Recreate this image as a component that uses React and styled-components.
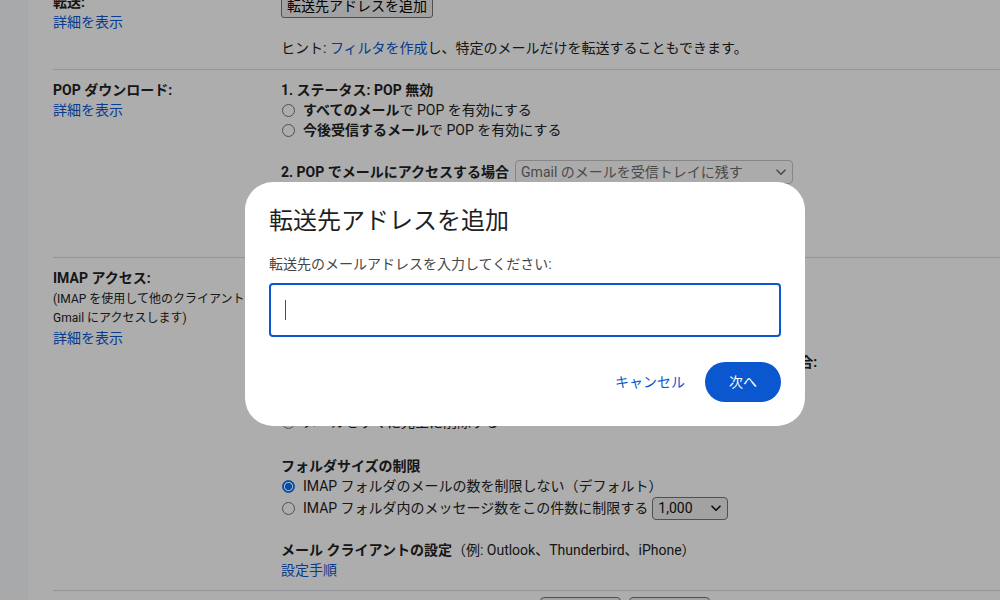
import React from 'react';
import styled, { createGlobalStyle } from 'styled-components';

const GlobalStyle = createGlobalStyle`
  html, body {
    margin: 0;
    padding: 0;
    height: 100%;
    overflow: hidden;
    background: #fff;
  }
  body {
    font-family: Roboto, "Noto Sans CJK JP", sans-serif;
    font-size: 14px;
    line-height: 20px;
    color: #222;
  }
  #root { height: 100%; }
`;

const Page = styled.div`
  display: flex;
  height: 100vh;
  overflow: hidden;
`;

const SideStrip = styled.div`
  width: 28px;
  flex: none;
  background: #f8fafd;
`;

const Main = styled.main`
  flex: 1;
  padding-left: 25px;
  min-width: 0;
`;

const SettingsList = styled.div`
  margin-top: -18px;
`;

const Row = styled.section`
  display: grid;
  grid-template-columns: 228px 1fr;
  padding: 10px 0 ${p => p.$padBottom ?? 11}px;
  border-bottom: 1px solid #dadce0;
`;

const LabelCol = styled.div`
  display: flex;
  flex-direction: column;
`;

const Label = styled.div`
  font-weight: 700;
`;

const SubNote = styled.div`
  font-size: 12px;
  line-height: 19px;
  padding-top: 2px;
  color: #222;
`;

const Link = styled.a`
  color: #0b57d0;
  text-decoration: none;
  cursor: pointer;
`;

const ContentCol = styled.div`
  display: flex;
  flex-direction: column;
  min-width: 0;
`;

const Block = styled.div`
  display: flex;
  flex-direction: column;
  margin-top: ${p => p.$gap || 0}px;
`;

const Line = styled.div`
  display: flex;
  align-items: center;
  min-height: 20px;
  white-space: nowrap;
`;

const Strong = styled.span`
  font-weight: 700;
`;

const NativeButton = styled.button`
  font: inherit;
  font-size: 14px;
  height: 24px;
  padding: 0 5px;
  margin-top: 2px;
  align-self: flex-start;
  background: #efefef;
  color: #000;
  border: 1px solid #767676;
  border-radius: 3px;
  line-height: 20px;
`;

const RadioRow = styled.label`
  display: flex;
  align-items: center;
  gap: 8px;
  min-height: ${p => p.$tall ? 24 : 20}px;
  white-space: nowrap;
`;

const Radio = styled.span`
  width: 13px;
  height: 13px;
  margin-left: 1px;
  flex: none;
  box-sizing: border-box;
  border-radius: 50%;
  border: 1px solid ${p => (p.$checked ? '#0075ff' : '#767676')};
  background: ${p =>
    p.$checked
      ? 'radial-gradient(circle, #0075ff 0 3.3px, #fff 3.8px 4.3px, #0075ff 4.8px)'
      : '#fff'};
`;

const SelectBox = styled.span`
  display: inline-flex;
  align-items: center;
  justify-content: space-between;
  box-sizing: border-box;
  width: ${p => p.$width}px;
  height: ${p => p.$height}px;
  margin-left: ${p => p.$ml || 0}px;
  padding: 0 6px 0 5px;
  border: 1px solid ${p => (p.$disabled ? '#c6c6c6' : '#767676')};
  border-radius: 4px;
  background: ${p => (p.$disabled ? '#fdfdfd' : '#efefef')};
  color: ${p => (p.$disabled ? '#6d6d6d' : '#111')};
  font-weight: 400;
`;

const Chevron = ({ color }) => (
  <svg width="10" height="7" viewBox="0 0 10 7" aria-hidden="true">
    <path d="M1 1.2 L5 5.2 L9 1.2" fill="none" stroke={color} strokeWidth="1.6" strokeLinecap="round" strokeLinejoin="round" />
  </svg>
);

const SaveBar = styled.div`
  display: grid;
  grid-template-columns: 228px 1fr;
  padding-top: 6px;
`;

const SaveButtons = styled.div`
  display: flex;
  justify-content: center;
  gap: 8px;
  padding-right: 32px;
`;

const SaveButton = styled.button`
  font: inherit;
  width: 81px;
  height: 30px;
  background: #efefef;
  border: 1px solid #767676;
  border-radius: 4px;
  color: #000;
`;

const Scrim = styled.div`
  position: fixed;
  inset: 0;
  background: rgba(0, 0, 0, 0.32);
`;

const Dialog = styled.div`
  position: fixed;
  left: 245px;
  top: 182px;
  width: 560px;
  box-sizing: border-box;
  padding: 24px;
  border-radius: 28px;
  background: #fff;
  display: flex;
  flex-direction: column;
  font-family: Roboto, "Noto Sans CJK JP", sans-serif;
`;

const DialogTitle = styled.h2`
  margin: 0;
  font-size: 24px;
  line-height: 30px;
  font-weight: 400;
  color: #1f1f1f;
`;

const DialogLabel = styled.div`
  margin-top: 18px;
  font-size: 14px;
  line-height: 20px;
  color: #444746;
`;

const InputBox = styled.div`
  margin-top: 9px;
  height: 54px;
  box-sizing: border-box;
  border: 2px solid #0b57d0;
  border-radius: 4px;
  padding: 0 14px;
  display: flex;
  align-items: center;
`;

const Caret = styled.span`
  width: 1px;
  height: 20px;
  background: #0b57d0;
`;

const Actions = styled.div`
  margin-top: 25px;
  display: flex;
  justify-content: flex-end;
  gap: 8px;
`;

const DialogButton = styled.button`
  font: inherit;
  font-size: 14px;
  font-weight: 400;
  height: 40px;
  padding: 0 ${p => (p.$filled ? 24 : 12)}px;
  border: none;
  border-radius: 20px;
  background: ${p => (p.$filled ? '#0b57d0' : 'transparent')};
  color: ${p => (p.$filled ? '#fff' : '#0b57d0')};
  cursor: pointer;
`;

export default function App() {
  return (
    <>
      <GlobalStyle />
      <Page>
        <SideStrip />
        <Main>
          <SettingsList>
            <Row>
              <LabelCol>
                <Label>転送:</Label>
                <Link>詳細を表示</Link>
              </LabelCol>
              <ContentCol>
                <NativeButton>転送先アドレスを追加</NativeButton>
                <Block $gap={20}>
                  <Line>
                    ヒント:&nbsp;<Link>フィルタを作成</Link>し、特定のメールだけを転送することもできます。
                  </Line>
                </Block>
              </ContentCol>
            </Row>

            <Row>
              <LabelCol>
                <Label>POP ダウンロード:</Label>
                <Link>詳細を表示</Link>
              </LabelCol>
              <ContentCol>
                <Block>
                  <Line><Strong>1. ステータス: POP 無効</Strong></Line>
                  <RadioRow><Radio /><span><Strong>すべてのメール</Strong>で POP を有効にする</span></RadioRow>
                  <RadioRow><Radio /><span><Strong>今後受信するメール</Strong>で POP を有効にする</span></RadioRow>
                </Block>
                <Block $gap={20}>
                  <RadioRow as="div" $tall>
                    <Strong>2. POP でメールにアクセスする場合</Strong>
                    <SelectBox $disabled $width={278} $height={24} $ml={-2}>
                      Gmail のメールを受信トレイに残す
                      <Chevron color="#6d6d6d" />
                    </SelectBox>
                  </RadioRow>
                </Block>
                <Block $gap={22}>
                  <Line><Strong>3. メール クライアントの設定</Strong>（例: Outlook、Eudora、Netscape Mail）</Line>
                  <Line><Link>設定手順</Link></Line>
                </Block>
              </ContentCol>
            </Row>

            <Row $padBottom={10}>
              <LabelCol>
                <Label>IMAP アクセス:</Label>
                <SubNote>(IMAP を使用して他のクライアントから<br />Gmail にアクセスします)</SubNote>
                <Link>詳細を表示</Link>
              </LabelCol>
              <ContentCol>
                <Block>
                  <Line><Strong>1. ステータス: IMAP 有効</Strong></Line>
                  <RadioRow><Radio $checked /><span>IMAP を有効にする</span></RadioRow>
                  <RadioRow><Radio /><span>IMAP を無効にする</span></RadioRow>
                </Block>
                <Block $gap={24}>
                  <Line><Strong>2. メッセージに削除のマークが付き、最後の表示 IMAP フォルダから消去された場合:</Strong></Line>
                  <RadioRow><Radio $checked /><span>メールをアーカイブする（デフォルト）</span></RadioRow>
                  <RadioRow><Radio /><span>メールをゴミ箱に移動する</span></RadioRow>
                  <RadioRow><Radio /><span>メールをすぐに完全に削除する</span></RadioRow>
                </Block>
                <Block $gap={24}>
                  <Line><Strong>フォルダサイズの制限</Strong></Line>
                  <RadioRow><Radio $checked /><span>IMAP フォルダのメールの数を制限しない（デフォルト）</span></RadioRow>
                  <RadioRow $tall>
                    <Radio />
                    <span>IMAP フォルダ内のメッセージ数をこの件数に制限する</span>
                    <SelectBox $width={76} $height={23} $ml={-4}>
                      1,000
                      <Chevron color="#111" />
                    </SelectBox>
                  </RadioRow>
                </Block>
                <Block $gap={20}>
                  <Line><Strong>メール クライアントの設定</Strong>（例: Outlook、Thunderbird、iPhone）</Line>
                  <Line><Link>設定手順</Link></Line>
                </Block>
              </ContentCol>
            </Row>
          </SettingsList>
          <SaveBar>
            <span />
            <SaveButtons>
              <SaveButton>変更を保存</SaveButton>
              <SaveButton>キャンセル</SaveButton>
            </SaveButtons>
          </SaveBar>
        </Main>
        <Scrim />
        <Dialog role="dialog" aria-label="転送先アドレスを追加">
          <DialogTitle>転送先アドレスを追加</DialogTitle>
          <DialogLabel>転送先のメールアドレスを入力してください:</DialogLabel>
          <InputBox>
            <Caret />
          </InputBox>
          <Actions>
            <DialogButton>キャンセル</DialogButton>
            <DialogButton $filled>次へ</DialogButton>
          </Actions>
        </Dialog>
      </Page>
    </>
  );
}
